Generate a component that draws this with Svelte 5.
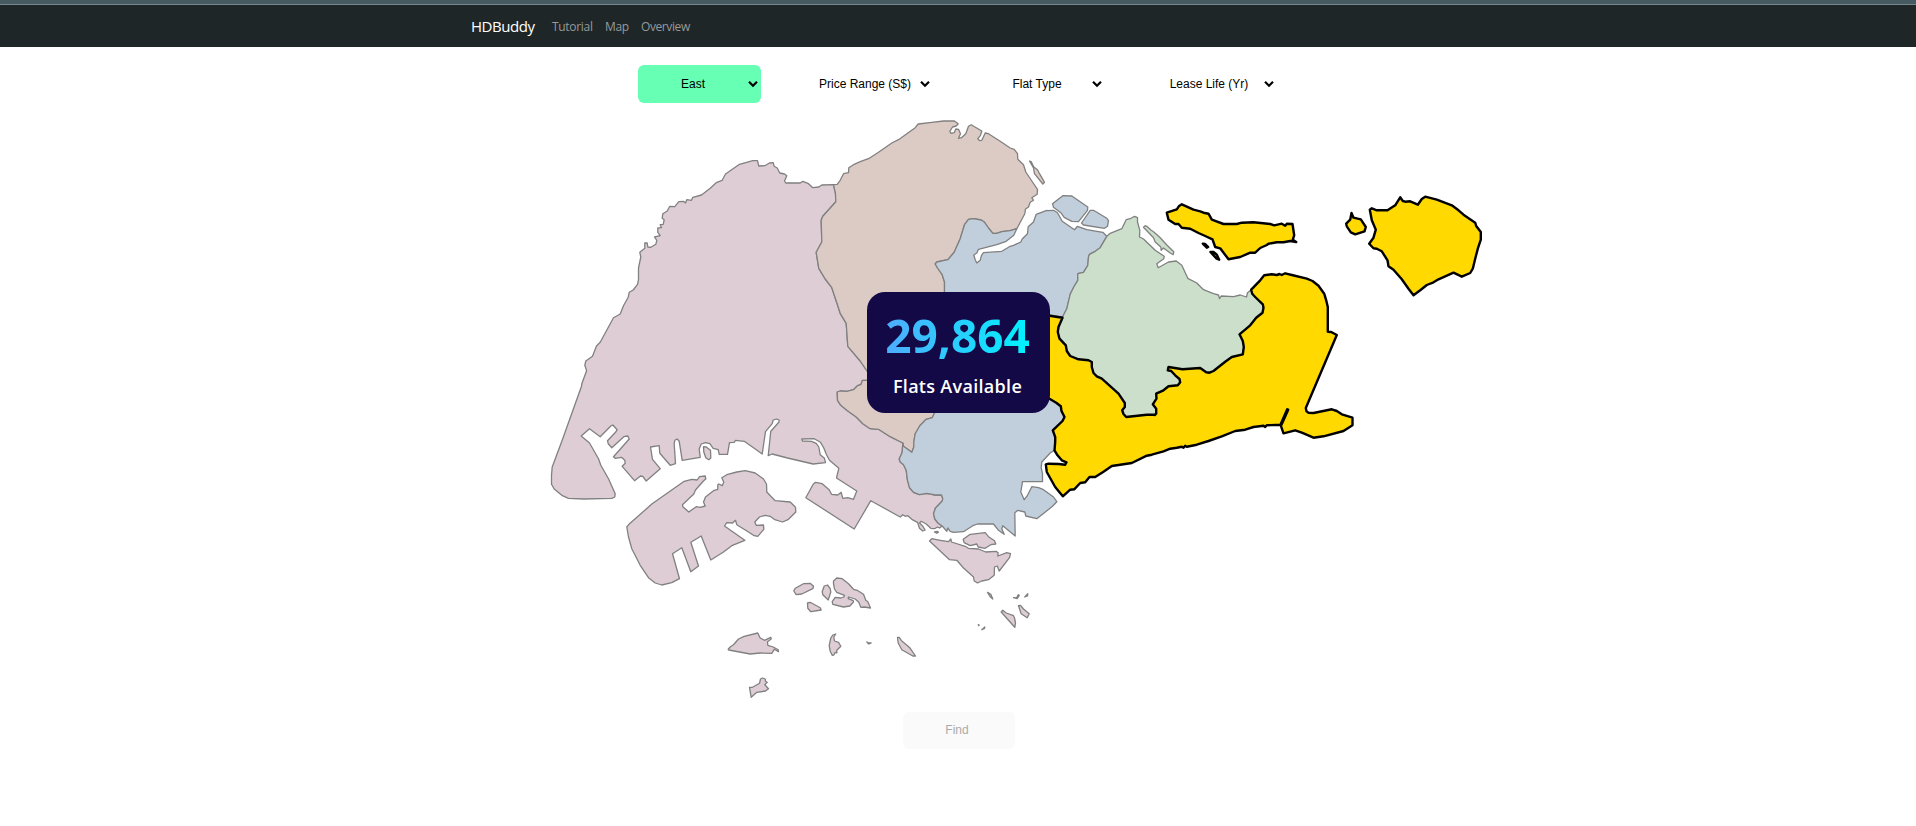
<script>
  // Outlines are stored per map tile: the tile's origin, then points in thirds of a pixel.
  const seg = (ox, oy, pts) =>
    pts.trim().split(/\s+/).map((p) => {
      const [x, y] = p.split(',').map(Number);
      return [ox + (x + 0.5) / 3, oy + (y + 1) / 3];
    });
  const A = (p) => seg(540, 140, p);
  const B = (p) => seg(540, 360, p);
  const C = (p) => seg(800, 110, p);
  const D = (p) => seg(1040, 150, p);
  const E = (p) => seg(1150, 180, p);
  const F = (p) => seg(820, 370, p);
  const G = (p) => seg(1000, 300, p);
  const H = (p) => seg(720, 520, p);
  const rev = (s) => [...s].reverse();
  const shape = (...segs) =>
    'M' + segs.flat().map(([x, y]) => `${x.toFixed(1)} ${y.toFixed(1)}`).join('L') + 'Z';

  // Borders shared by two regions
  const westNorth = A('960,662 923,618 918,549 900,519 893,496 875,442 855,416 836,384 828,336 845,305 843,240 848,228 887,184 886,160 880,133');
  const westNorthLow = F('248,218 210,199 175,177 150,175 128,160 108,140 80,120 62,105 52,90 51,65 60,62 80,63 100,58 112,46 122,43 127,30 143,30 160,30');
  const westCentral = F('366,467 354,459 344,446 340,430 346,413 366,392 368,385 364,374 345,374 320,369 298,373 280,366 268,352 262,330 258,300 250,283 240,275 237,266 246,246 248,218');
  const northCentralLow = F('248,218 250,228 275,246 281,230 281,215 285,190 299,166 318,147 336,142 343,128 352,90');
  const northCentral = C('433,570 433,546 433,515 426,493 412,473 405,461 410,455 443,448 462,426 480,385 493,343 505,327 520,325 543,329 553,336 565,353 578,369 590,369 605,364 630,361 650,355');
  const centralNE = D('200,258 180,292 165,303 148,312 145,320 143,345 130,366 113,370 113,390 101,410 90,432 80,475 67,500');
  const centralEast = F('650,60 688,85 708,97 722,108 724,122 733,140 727,152 698,180 705,200 705,215 703,240');
  const neEast = [
    ...E('303,328 306,340 315,350 338,372 340,382 337,397 318,412 300,435 268,462 278,482 281,500 278,522 245,530 225,544 190,572 178,577 168,576 150,563 97,567 55,560 53,570 63,572 75,585 88,596 90,606 83,615 55,618 40,630 18,640 19,655 8,672 18,685 18,700 14,704'),
    ...G('465,343 440,343 378,350 370,341 366,330 374,320 374,308 355,280 305,235 290,228 280,218 275,200 275,185 265,180 235,177 210,167 200,152 197,135 178,115 173,95 175,80 187,52')
  ];

  const west = [
    shape(
      A('880,133 845,134 836,140 818,142 805,130 788,123 780,128 737,128 733,122 740,106 733,101 719,98 711,83 702,78 699,67 688,68 674,76 656,77 652,61 638,61 598,72 556,101 546,120 528,127 510,144 484,164 458,171 454,180 440,178 436,188 430,183 416,184 404,199 389,198 381,212 368,220 366,234 372,238 369,252 360,253 364,262 353,263 353,276 360,286 343,290 350,300 347,312 332,321 323,320 321,308 314,308 314,324 299,336 302,350 295,383 295,418 292,432 279,449 267,456 264,471 250,496 240,521 220,532 180,606 169,617 157,648 137,662 134,675 139,690'),
      B('139,32 125,70 124,78 66,240 36,320 34,345 34,372 42,386 65,405 85,414 130,416 215,414 224,410 225,400 205,355 182,315 175,295 148,248 123,227 148,205 180,229 212,197 218,194 231,208 226,216 202,241 204,250 215,262 251,229 263,227 267,236 220,289 225,294 244,291 254,300 255,309 246,318 283,361 301,347 308,348 318,362 360,325 337,297 331,260 357,256 359,279 390,315 406,310 402,250 404,240 411,236 417,243 426,300 480,291 477,266 483,251 496,247 509,250 519,264 534,268 537,282 562,282 568,247 582,246 586,240 612,243 640,262 666,281 676,214 696,190 699,179 709,176 717,179 716,186 692,213 684,286 696,281 742,293 819,311 856,307 853,294 840,283 836,260 828,249 814,243 787,242 785,236 822,235 841,246 851,263 859,283 868,300 896,324 889,353 950,392 940,417 923,412 908,414 903,396 893,404 874,402 867,388 846,370 826,366 819,372 797,412 942,506'),
      F('152,391 240,440 248,433 255,438 263,436 275,447 292,456 298,474 308,482 315,479 308,468 298,458 303,453 318,461 332,474 343,475 352,470 358,473 366,467'),
      westCentral, westNorthLow, westNorth
    ),
    shape(B('490,259 498,260 511,270 512,293 506,298 497,292 491,275')),
    shape(B('260,500 268,490 325,440 335,431 432,363 455,357 471,359 478,349 495,347 497,355 487,365 466,389 461,401 427,433 428,439 446,455 468,439 480,441 495,437 490,425 496,410 520,391 533,387 533,373 536,371 546,376 551,366 545,352 560,343 590,335 615,331 645,338 670,356 679,371 680,395 692,408 705,421 750,425 766,441 767,455 745,477 727,485 704,478 690,468 675,465 658,470 644,485 648,495 670,494 671,507 653,528 642,526 625,515 590,493 586,480 577,488 560,487 553,497 614,540 575,556 550,575 512,599 483,527 452,546 475,617 452,634 425,562 397,580 418,655 395,667 365,674 345,668 325,652 300,615 275,565 265,530')),
    shape(H('221,212 225,204 250,190 270,189 280,198 278,205 245,221 228,223')),
    shape(H('306,214 312,197 322,194 330,205 332,215 324,239 308,223')),
    shape(H('340,182 350,173 366,175 385,190 400,207 411,210 430,222 437,240 443,244 451,263 432,260 422,261 416,246 405,236 385,230 384,235 399,241 400,245 389,257 370,260 338,252 336,244 345,231 362,233 371,230 373,225 350,216 343,206 340,190')),
    shape(H('262,248 270,246 300,262 303,269 272,274 263,264')),
    shape(H('24,387 30,380 40,373 55,356 72,348 113,338 120,353 133,360 152,351 153,356 142,364 143,375 159,380 174,388 175,394 162,387 155,399 120,398 90,401 26,389')),
    shape(H('338,344 347,341 341,350 343,362 355,366 362,378 350,390 350,398 345,396 341,404 336,405 330,393 327,376 332,353')),
    shape(H('440,365 446,368 453,368 446,371')),
    shape(H('532,351 537,351 545,362 562,376 570,384 586,407 578,407 545,388 534,368')),
    shape(H('88,501 97,501 118,489 121,476 127,473 135,476 136,483 141,486 134,493 145,505 136,512 110,516 93,531')),
    shape(H('628,62 635,55 660,60 685,64 692,56 694,65 735,78 745,84 775,86 797,95 828,93 834,98 833,107 860,97 871,100 868,112 837,152 831,137 823,140 822,165 805,178 785,182 772,188 762,182 760,170 730,143 710,120 688,118 660,92')),
    shape(H('729,57 750,42 795,37 805,49 823,61 827,71 812,73 795,84 774,80 770,71 750,76 732,67')),
    shape(H('802,216 812,222 818,236 810,229')),
    shape(H('880,232 889,233 894,223 897,225 891,235')),
    shape(H('914,230 923,220 922,227')),
    shape(H('843,275 848,270 858,278 880,286 883,293 886,308 884,321 867,302')),
    shape(H('895,256 901,255 910,266 927,280 921,292 903,280')),
    shape(H('774,313 777,314 776,316')),
    shape(H('785,328 794,320 793,324')),
    shape(H('643,35 651,33 655,36 650,39'))
  ];
  const north = [
    shape(
      C('100,223 111,222 120,210 130,190 145,187 146,172 160,163 180,154 205,145 235,126 275,98 295,88 345,52 354,41 395,36 430,32 463,32 474,40 468,47 457,50 449,63 453,69 462,67 467,56 475,57 481,70 475,84 484,82 497,70 505,48 513,43 545,62 541,75 533,85 539,91 545,90 551,77 555,68 565,70 600,93 630,113 642,117 652,130 653,147 670,163 677,185 695,212 712,237 711,252 695,262 700,270 690,276 685,290 676,296 674,310 650,355'),
      rev(northCentral), rev(northCentralLow), westNorthLow, westNorth
    ),
    shape(C('688,152 693,154 701,170 712,178 718,190 733,216 728,221 703,190 700,173'))
  ];
  const central = [
    shape(
      C('650,355 641,375 618,393 590,403 535,417 530,428 521,434 525,448 530,458 540,450 544,435 550,427 605,423 630,408 640,405 662,395 666,386 682,370 684,349 700,335 708,312 740,300'),
      D('20,181 40,180 52,187 66,213 103,238 112,228 140,238 188,246 200,258'),
      centralNE, D('27,494 -10,490'),
      centralEast,
      F('690,248 665,275 663,292 667,310 667,334 607,334 602,365 612,388 622,375 635,349 655,352 670,358 700,380 710,394 697,408 650,445 617,437 614,425 593,420 584,427 585,497 548,466 545,475 552,492 535,480 520,461 472,461 460,465 430,484 400,486 390,483 383,473 380,483 366,467'),
      westCentral, northCentralLow, northCentral
    ),
    shape(D('37,160 68,136 95,137 143,170 142,180 115,214 95,213 72,201 62,187 40,171')),
    shape(D('124,218 150,180 160,180 200,204 205,211 202,228 193,234 130,224'))
  ];
  const northeast = [
    shape(
      D('200,258 210,249 245,235 258,208 270,205 283,198 292,202 292,215 299,240 298,260 310,266 345,300 372,318 371,325 350,340 354,352 385,335 408,332 425,345 443,384 470,398 490,418 520,430 535,434 538,445 543,437 580,439 600,434 619,440 622,427'),
      neEast, rev(centralNE)
    ),
    shape(D('310,231 315,226 320,228 333,240 340,244 358,260 380,284 401,304 399,313 390,308 370,293 363,300 362,290 345,275 340,262'))
  ];
  const east = [
    shape(
      E('303,328 330,300 342,285 365,282 380,284 388,281 395,284 405,279 425,284 470,295 487,302 505,316 522,340 528,360 533,380 533,454 543,455 560,464 467,683 469,693 475,697 490,698 545,687 560,692 575,702 607,712 607,735 580,752 520,768 490,772 455,757 435,750 400,759 391,733 411,687 414,688 394,733'),
      G('800,375 795,380 790,376 760,380 735,388 705,392 665,408 625,422 590,433 560,439 555,436 550,442 545,439 530,442 510,445 490,453 455,463 440,466 395,488 335,497 310,514 285,530 268,530 255,546 240,548 222,567 210,568 188,588 165,560 140,515 137,492 145,490 175,491 195,493 199,486 185,480 172,465'),
      rev(centralEast), G('100,40 148,46 187,52'), rev(neEast)
    ),
    shape(E('659,88 665,84 680,90 712,90 735,75 750,51 758,62 765,64 780,63 803,73 815,56 825,49 860,58 905,75 925,90 940,103 975,127 978,137 992,155 992,178 983,205 975,235 968,265 960,278 935,289 910,277 865,297 850,306 830,314 810,330 790,345 775,325 755,297 730,268 715,258 712,240 695,213 680,205 670,204 657,190 670,172 677,148 665,120')),
    shape(E('50,97 80,87 86,78 95,72 130,88 150,93 160,97 175,100 185,118 220,131 260,131 275,127 310,126 360,131 372,135 395,130 405,136 410,130 427,131 432,165 428,178 438,185 420,182 400,186 380,186 355,190 350,194 330,203 315,217 300,217 270,230 235,237 210,204 195,200 187,177 165,167 145,158 120,145 95,142 85,131 75,131 55,118')),
    shape(E('604,98 610,112 632,117 647,140 643,153 615,162 602,156 590,138 588,130 600,118')),
    shape(E('158,190 165,191 174,200 170,202')),
    shape(E('181,215 190,215 200,223 207,238 198,234'))
  ];

  const regions = [
    { name: 'west', paths: west },
    { name: 'north', paths: north },
    { name: 'central', paths: central },
    { name: 'northeast', paths: northeast },
    { name: 'east', paths: east }
  ];
  const filters = ['East', 'Price Range (S$)', 'Flat Type', 'Lease Life (Yr)'];
  let selected = 'East';
</script>

<div class="strip"></div>
<nav>
  <a class="brand" href="#home">HDBuddy</a>
  <a class="tutorial" href="#tutorial">Tutorial</a>
  <a class="map-link" href="#map">Map</a>
  <a class="overview" href="#overview">Overview</a>
</nav>
<main>
  <div class="filters">
    {#each filters as f}
      <button class="filter" class:active={f === selected}>
        <span>{f}</span>
        <svg width="12" height="8" viewBox="0 0 12 8"><path d="M2 1.8L6 5.8L10 1.8" /></svg>
      </button>
    {/each}
  </div>
  <div class="map">
    <svg width="960" height="590" viewBox="540 112 960 590">
      {#each regions as r}
        <g class={r.name}>
          {#each r.paths as d}<path {d} />{/each}
        </g>
      {/each}
    </svg>
    <div class="card">
      <strong>29,864</strong>
      <span>Flats Available</span>
    </div>
  </div>
  <button class="find" disabled>Find</button>
</main>

<style>
  :global(body) { background: #fff; overflow: hidden; }
  .strip { height: 4px; background: #465a61; border-bottom: 1px solid #76868b; }
  nav {
    height: 42px; box-sizing: border-box; padding: 0 0 0 471px;
    display: flex; align-items: center; background: #1f2628;
    font-family: "Open Sans", sans-serif; font-size: 12px;
  }
  nav a { color: #969a9b; text-decoration: none; white-space: nowrap; }
  nav .brand { color: #fff; font-size: 15px; width: 81px; letter-spacing: -0.45px; }
  .tutorial { width: 53px; letter-spacing: -0.3px; }
  .map-link { width: 36px; letter-spacing: -0.3px; }
  .overview { letter-spacing: -0.4px; }
  main { display: flex; flex-direction: column; align-items: center; font-family: "Liberation Sans", Arial, sans-serif; }
  .filters { display: flex; gap: 49px; margin-top: 18px; margin-right: 1px; }
  button { border: 0; font-family: inherit; font-size: 12px; }
  .filter {
    width: 123px; height: 38px; border-radius: 6px; padding: 0 2px 0 0; background: #fff;
    color: #000; display: flex; align-items: center; white-space: nowrap;
  }
  .filter span { flex: 1; text-align: center; padding-left: 1px; }
  .filter svg { flex: none; fill: none; stroke: #000; stroke-width: 2.2; }
  .filter.active { background: #66ffb3; }
  .map { width: 960px; height: 590px; margin-top: 9px; padding-left: 124px; position: relative; }
  .map svg { display: block; }
  .map path { stroke: #808080; stroke-width: 1.3; stroke-linejoin: round; }
  .west { fill: #decdd5; }
  .north { fill: #dccbc5; }
  .central { fill: #c1cedb; }
  .northeast { fill: #ccdfcb; }
  .east { fill: #ffd900; }
  .map .east path { stroke: #000; stroke-width: 2.4; }
  .card {
    position: absolute; left: 451px; top: 180px; width: 183px; height: 121px;
    border-radius: 18px; background: #130947; box-sizing: border-box; padding-top: 12px;
    display: flex; flex-direction: column; align-items: center; color: #fff;
    font-family: "Open Sans", sans-serif;
  }
  .card strong {
    font-size: 46px; line-height: 62px; font-weight: 700; margin-left: -2px;
    background: linear-gradient(90deg, #4facfe, #00f2fe);
    -webkit-background-clip: text; background-clip: text; color: transparent;
  }
  .card span { font-size: 18px; line-height: 24px; font-weight: 600; letter-spacing: 0.3px; margin: 8px 0 0 -2px; white-space: nowrap; }
  .find { width: 112px; height: 37px; margin: 10px 0 0 1px; padding: 0 3px 2px 0; border-radius: 6px; background: #fafafa; color: #aaa; }
</style>
